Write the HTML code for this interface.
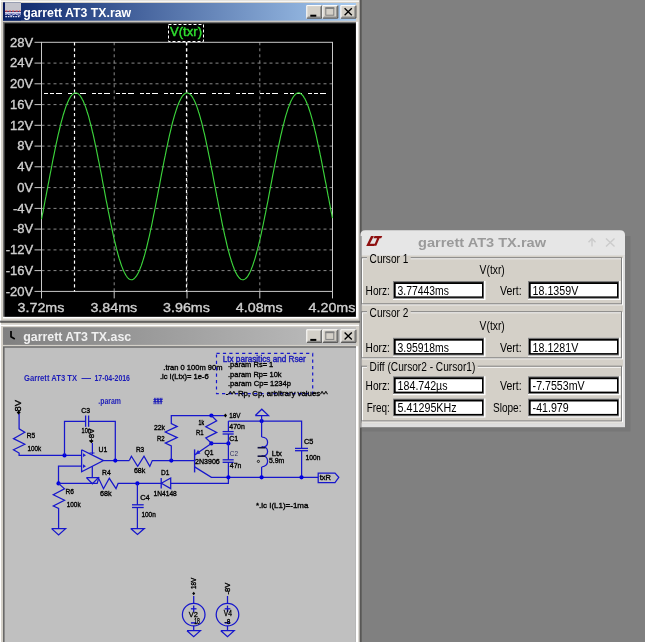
<!DOCTYPE html>
<html><head><meta charset="utf-8"><title>LTspice</title>
<style>
html,body{margin:0;padding:0;background:#808080;overflow:hidden}
svg{display:block;font-family:"Liberation Sans",sans-serif;will-change:transform;transform:translateZ(0)}
</style></head><body>
<svg width="645" height="642" viewBox="0 0 645 642">
<defs>
<linearGradient id="ga" x1="0" x2="1" y1="0" y2="0"><stop offset="0" stop-color="#0a246a"/><stop offset="1" stop-color="#a6caf0"/></linearGradient>
<linearGradient id="gi" x1="0" x2="1" y1="0" y2="0"><stop offset="0" stop-color="#808080"/><stop offset="1" stop-color="#c0c0c0"/></linearGradient>
</defs>
<rect x="0" y="0" width="645" height="642" fill="#808080"/>

<rect x="0" y="0" width="361.5" height="322.8" fill="#d4d0c8"/>
<rect x="0" y="0" width="1" height="322.8" fill="#fff"/>
<rect x="0" y="0.6000000000000001" width="359" height="1.2" fill="#fff"/>
<rect x="359.5" y="0" width="0.8" height="322.8" fill="#808080"/>
<rect x="360.2" y="0" width="1.45" height="322.8" fill="#404040"/>
<rect x="3" y="3" width="353" height="17.7" fill="url(#ga)"/>
<text x="23.2" y="17.1" font-size="12" fill="#fff" font-weight="bold" textLength="108" lengthAdjust="spacingAndGlyphs">garrett AT3 TX.raw</text>
<rect x="306.3" y="5.1" width="16" height="13.5" fill="#d4d0c8"/>
<path d="M306.8,18.6 V5.6 H321.8" stroke="#fff" fill="none"/>
<path d="M321.8,5.6 V18.1 H306.8" stroke="#404040" fill="none"/>
<path d="M320.8,6.6 V17.1 H307.8" stroke="#808080" fill="none"/>
<rect x="310.3" y="14.7" width="6" height="2" fill="#000"/>
<rect x="322.3" y="5.1" width="16" height="13.5" fill="#d4d0c8"/>
<path d="M322.8,18.6 V5.6 H337.8" stroke="#fff" fill="none"/>
<path d="M337.8,5.6 V18.1 H322.8" stroke="#404040" fill="none"/>
<path d="M336.8,6.6 V17.1 H323.8" stroke="#808080" fill="none"/>
<rect x="325.8" y="8.399999999999999" width="8" height="6.8" fill="none" stroke="#808080"/>
<rect x="325.3" y="7.1" width="9" height="1.8" fill="#808080"/>
<rect x="340.4" y="5.1" width="16" height="13.5" fill="#d4d0c8"/>
<path d="M340.9,18.6 V5.6 H355.9" stroke="#fff" fill="none"/>
<path d="M355.9,5.6 V18.1 H340.9" stroke="#404040" fill="none"/>
<path d="M354.9,6.6 V17.1 H341.9" stroke="#808080" fill="none"/>
<path d="M344.59999999999997,8.3 L351.79999999999995,15.299999999999999 M351.79999999999995,8.3 L344.59999999999997,15.299999999999999" stroke="#000" stroke-width="1.35" fill="none"/>
<rect x="0" y="320.6" width="361.5" height="0.8" fill="#808080"/>
<rect x="0" y="321.3" width="361.5" height="1.5" fill="#404040"/>
<rect x="3" y="2.5" width="18" height="18" fill="#0a246a"/>
<rect x="5" y="2.5" width="16" height="8.6" fill="#c4c4cc"/>
<rect x="3.2" y="2.5" width="1.8" height="16" fill="#08185a"/>
<path d="M5.3,11.2 H20.5" stroke="#e04848" stroke-width="1.2" stroke-dasharray="2.2,1.2" fill="none"/>
<rect x="5" y="12" width="16" height="1.8" fill="#d4d4ee"/>
<rect x="5" y="13.8" width="16" height="1.6" fill="#1a2a80"/>
<path d="M5.3,14.6 q2,-1.6 4,0 t4,0 t4,0 t3.5,0" stroke="#e8e8ff" stroke-width="0.9" fill="none"/>
<path d="M5.3,16.7 H20.5" stroke="#e4e4f4" stroke-width="1.3" stroke-dasharray="1.6,0.9" fill="none"/>
<rect x="3" y="21.8" width="355.2" height="296.7" fill="#fff"/>
<rect x="3" y="21.8" width="353" height="295" fill="#707070"/>
<rect x="4.5" y="23.3" width="351.3" height="293.4" fill="#000"/>
<path d="M41.5,63.1 H332.5" stroke="#888888" stroke-width="1" stroke-dasharray="3,3" fill="none"/>
<path d="M41.5,83.8 H332.5" stroke="#888888" stroke-width="1" stroke-dasharray="3,3" fill="none"/>
<path d="M41.5,104.6 H332.5" stroke="#888888" stroke-width="1" stroke-dasharray="3,3" fill="none"/>
<path d="M41.5,125.3 H332.5" stroke="#888888" stroke-width="1" stroke-dasharray="3,3" fill="none"/>
<path d="M41.5,146.1 H332.5" stroke="#888888" stroke-width="1" stroke-dasharray="3,3" fill="none"/>
<path d="M41.5,166.8 H332.5" stroke="#888888" stroke-width="1" stroke-dasharray="3,3" fill="none"/>
<path d="M41.5,187.6 H332.5" stroke="#888888" stroke-width="1" stroke-dasharray="3,3" fill="none"/>
<path d="M41.5,208.4 H332.5" stroke="#888888" stroke-width="1" stroke-dasharray="3,3" fill="none"/>
<path d="M41.5,229.1 H332.5" stroke="#888888" stroke-width="1" stroke-dasharray="3,3" fill="none"/>
<path d="M41.5,249.9 H332.5" stroke="#888888" stroke-width="1" stroke-dasharray="3,3" fill="none"/>
<path d="M41.5,270.6 H332.5" stroke="#888888" stroke-width="1" stroke-dasharray="3,3" fill="none"/>
<path d="M114.2,42.3 V291.4" stroke="#888888" stroke-width="1" stroke-dasharray="3,3" fill="none"/>
<path d="M187.0,42.3 V291.4" stroke="#888888" stroke-width="1" stroke-dasharray="3,3" fill="none"/>
<path d="M259.8,42.3 V291.4" stroke="#888888" stroke-width="1" stroke-dasharray="3,3" fill="none"/>
<rect x="41.5" y="42.3" width="291.0" height="249.09999999999997" fill="none" stroke="#c8c8c8" stroke-width="1"/>
<path d="M34.5,42.3 H41.5" stroke="#c8c8c8" stroke-width="1" fill="none"/>
<path d="M34.5,63.1 H41.5" stroke="#c8c8c8" stroke-width="1" fill="none"/>
<path d="M34.5,83.8 H41.5" stroke="#c8c8c8" stroke-width="1" fill="none"/>
<path d="M34.5,104.6 H41.5" stroke="#c8c8c8" stroke-width="1" fill="none"/>
<path d="M34.5,125.3 H41.5" stroke="#c8c8c8" stroke-width="1" fill="none"/>
<path d="M34.5,146.1 H41.5" stroke="#c8c8c8" stroke-width="1" fill="none"/>
<path d="M34.5,166.8 H41.5" stroke="#c8c8c8" stroke-width="1" fill="none"/>
<path d="M34.5,187.6 H41.5" stroke="#c8c8c8" stroke-width="1" fill="none"/>
<path d="M34.5,208.4 H41.5" stroke="#c8c8c8" stroke-width="1" fill="none"/>
<path d="M34.5,229.1 H41.5" stroke="#c8c8c8" stroke-width="1" fill="none"/>
<path d="M34.5,249.9 H41.5" stroke="#c8c8c8" stroke-width="1" fill="none"/>
<path d="M34.5,270.6 H41.5" stroke="#c8c8c8" stroke-width="1" fill="none"/>
<path d="M34.5,291.4 H41.5" stroke="#c8c8c8" stroke-width="1" fill="none"/>
<path d="M41.5,291.4 V298.4" stroke="#c8c8c8" stroke-width="1" fill="none"/>
<path d="M114.2,291.4 V298.4" stroke="#c8c8c8" stroke-width="1" fill="none"/>
<path d="M187.0,291.4 V298.4" stroke="#c8c8c8" stroke-width="1" fill="none"/>
<path d="M259.8,291.4 V298.4" stroke="#c8c8c8" stroke-width="1" fill="none"/>
<path d="M332.5,291.4 V298.4" stroke="#c8c8c8" stroke-width="1" fill="none"/>
<text x="33.2" y="46.6" font-size="13" fill="#cfcfcf" text-anchor="end" stroke="#cfcfcf" stroke-width="0.35">28V</text>
<text x="33.2" y="67.4" font-size="13" fill="#cfcfcf" text-anchor="end" stroke="#cfcfcf" stroke-width="0.35">24V</text>
<text x="33.2" y="88.1" font-size="13" fill="#cfcfcf" text-anchor="end" stroke="#cfcfcf" stroke-width="0.35">20V</text>
<text x="33.2" y="108.9" font-size="13" fill="#cfcfcf" text-anchor="end" stroke="#cfcfcf" stroke-width="0.35">16V</text>
<text x="33.2" y="129.6" font-size="13" fill="#cfcfcf" text-anchor="end" stroke="#cfcfcf" stroke-width="0.35">12V</text>
<text x="33.2" y="150.4" font-size="13" fill="#cfcfcf" text-anchor="end" stroke="#cfcfcf" stroke-width="0.35">8V</text>
<text x="33.2" y="171.2" font-size="13" fill="#cfcfcf" text-anchor="end" stroke="#cfcfcf" stroke-width="0.35">4V</text>
<text x="33.2" y="191.9" font-size="13" fill="#cfcfcf" text-anchor="end" stroke="#cfcfcf" stroke-width="0.35">0V</text>
<text x="33.2" y="212.7" font-size="13" fill="#cfcfcf" text-anchor="end" stroke="#cfcfcf" stroke-width="0.35">-4V</text>
<text x="33.2" y="233.4" font-size="13" fill="#cfcfcf" text-anchor="end" stroke="#cfcfcf" stroke-width="0.35">-8V</text>
<text x="33.2" y="254.2" font-size="13" fill="#cfcfcf" text-anchor="end" stroke="#cfcfcf" stroke-width="0.35">-12V</text>
<text x="33.2" y="274.9" font-size="13" fill="#cfcfcf" text-anchor="end" stroke="#cfcfcf" stroke-width="0.35">-16V</text>
<text x="33.2" y="295.7" font-size="13" fill="#cfcfcf" text-anchor="end" stroke="#cfcfcf" stroke-width="0.35">-20V</text>
<text x="41.0" y="311.5" font-size="13" fill="#cfcfcf" textLength="46.8" lengthAdjust="spacingAndGlyphs" text-anchor="middle" stroke="#cfcfcf" stroke-width="0.35">3.72ms</text>
<text x="113.8" y="311.5" font-size="13" fill="#cfcfcf" textLength="46.8" lengthAdjust="spacingAndGlyphs" text-anchor="middle" stroke="#cfcfcf" stroke-width="0.35">3.84ms</text>
<text x="186.5" y="311.5" font-size="13" fill="#cfcfcf" textLength="46.8" lengthAdjust="spacingAndGlyphs" text-anchor="middle" stroke="#cfcfcf" stroke-width="0.35">3.96ms</text>
<text x="259.2" y="311.5" font-size="13" fill="#cfcfcf" textLength="46.8" lengthAdjust="spacingAndGlyphs" text-anchor="middle" stroke="#cfcfcf" stroke-width="0.35">4.08ms</text>
<text x="332.0" y="311.5" font-size="13" fill="#cfcfcf" textLength="46.8" lengthAdjust="spacingAndGlyphs" text-anchor="middle" stroke="#cfcfcf" stroke-width="0.35">4.20ms</text>
<path d="M74.5,42.3 V291.4" stroke="#fff" stroke-width="1.2" stroke-dasharray="3.2,2.7" fill="none"/>
<path d="M186.5,42.3 V291.4" stroke="#fff" stroke-width="1.2" stroke-dasharray="3.2,2.7" fill="none"/>
<path d="M44.0,93.5 H326.5" stroke="#fff" stroke-width="1.15" stroke-dasharray="4,2,4,2,6,6" fill="none"/>
<path d="M41.5,219.1 L42.2,215.4 L43.0,211.8 L43.7,208.1 L44.4,204.3 L45.1,200.5 L45.9,196.7 L46.6,192.9 L47.3,189.1 L48.0,185.3 L48.8,181.4 L49.5,177.6 L50.2,173.8 L51.0,170.0 L51.7,166.3 L52.4,162.5 L53.1,158.9 L53.9,155.2 L54.6,151.6 L55.3,148.1 L56.0,144.6 L56.8,141.2 L57.5,137.9 L58.2,134.7 L59.0,131.5 L59.7,128.5 L60.4,125.5 L61.1,122.7 L61.9,119.9 L62.6,117.3 L63.3,114.7 L64.1,112.3 L64.8,110.1 L65.5,107.9 L66.2,105.9 L67.0,104.0 L67.7,102.3 L68.4,100.7 L69.1,99.2 L69.9,97.9 L70.6,96.7 L71.3,95.7 L72.1,94.9 L72.8,94.2 L73.5,93.6 L74.2,93.2 L75.0,93.0 L75.7,92.9 L76.4,93.0 L77.1,93.2 L77.9,93.6 L78.6,94.1 L79.3,94.8 L80.1,95.7 L80.8,96.7 L81.5,97.9 L82.2,99.2 L83.0,100.6 L83.7,102.2 L84.4,104.0 L85.2,105.9 L85.9,107.9 L86.6,110.0 L87.3,112.3 L88.1,114.7 L88.8,117.2 L89.5,119.8 L90.2,122.6 L91.0,125.5 L91.7,128.4 L92.4,131.5 L93.2,134.6 L93.9,137.9 L94.6,141.2 L95.3,144.6 L96.1,148.0 L96.8,151.6 L97.5,155.1 L98.2,158.8 L99.0,162.5 L99.7,166.2 L100.4,169.9 L101.2,173.7 L101.9,177.5 L102.6,181.4 L103.3,185.2 L104.1,189.0 L104.8,192.9 L105.5,196.7 L106.2,200.5 L107.0,204.2 L107.7,208.0 L108.4,211.7 L109.2,215.4 L109.9,219.0 L110.6,222.5 L111.3,226.0 L112.1,229.5 L112.8,232.8 L113.5,236.1 L114.2,239.3 L115.0,242.4 L115.7,245.5 L116.4,248.4 L117.2,251.2 L117.9,253.9 L118.6,256.5 L119.3,258.9 L120.1,261.3 L120.8,263.5 L121.5,265.6 L122.3,267.6 L123.0,269.4 L123.7,271.1 L124.4,272.6 L125.2,274.0 L125.9,275.2 L126.6,276.3 L127.3,277.3 L128.1,278.1 L128.8,278.7 L129.5,279.2 L130.3,279.5 L131.0,279.7 L131.7,279.7 L132.4,279.6 L133.2,279.3 L133.9,278.8 L134.6,278.2 L135.3,277.4 L136.1,276.5 L136.8,275.4 L137.5,274.2 L138.3,272.8 L139.0,271.3 L139.7,269.6 L140.4,267.8 L141.2,265.9 L141.9,263.8 L142.6,261.6 L143.3,259.3 L144.1,256.8 L144.8,254.3 L145.5,251.6 L146.3,248.8 L147.0,245.9 L147.7,242.9 L148.4,239.8 L149.2,236.6 L149.9,233.3 L150.6,230.0 L151.4,226.6 L152.1,223.1 L152.8,219.5 L153.5,215.9 L154.3,212.2 L155.0,208.5 L155.7,204.8 L156.4,201.0 L157.2,197.2 L157.9,193.4 L158.6,189.6 L159.4,185.8 L160.1,181.9 L160.8,178.1 L161.5,174.3 L162.3,170.5 L163.0,166.7 L163.7,163.0 L164.4,159.3 L165.2,155.7 L165.9,152.1 L166.6,148.5 L167.4,145.1 L168.1,141.7 L168.8,138.3 L169.5,135.1 L170.3,131.9 L171.0,128.9 L171.7,125.9 L172.4,123.0 L173.2,120.2 L173.9,117.6 L174.6,115.1 L175.4,112.6 L176.1,110.3 L176.8,108.2 L177.5,106.1 L178.3,104.2 L179.0,102.5 L179.7,100.9 L180.5,99.4 L181.2,98.1 L181.9,96.9 L182.6,95.8 L183.4,95.0 L184.1,94.2 L184.8,93.7 L185.5,93.3 L186.3,93.0 L187.0,92.9 L187.7,93.0 L188.5,93.2 L189.2,93.5 L189.9,94.1 L190.6,94.8 L191.4,95.6 L192.1,96.6 L192.8,97.7 L193.5,99.0 L194.3,100.4 L195.0,102.0 L195.7,103.7 L196.5,105.6 L197.2,107.6 L197.9,109.7 L198.6,112.0 L199.4,114.4 L200.1,116.9 L200.8,119.5 L201.6,122.2 L202.3,125.1 L203.0,128.0 L203.7,131.1 L204.5,134.2 L205.2,137.4 L205.9,140.7 L206.6,144.1 L207.4,147.6 L208.1,151.1 L208.8,154.7 L209.6,158.3 L210.3,162.0 L211.0,165.7 L211.7,169.5 L212.5,173.2 L213.2,177.1 L213.9,180.9 L214.6,184.7 L215.4,188.5 L216.1,192.4 L216.8,196.2 L217.6,200.0 L218.3,203.8 L219.0,207.5 L219.7,211.2 L220.5,214.9 L221.2,218.5 L221.9,222.1 L222.6,225.6 L223.4,229.0 L224.1,232.4 L224.8,235.7 L225.6,238.9 L226.3,242.0 L227.0,245.1 L227.7,248.0 L228.5,250.8 L229.2,253.5 L229.9,256.1 L230.7,258.6 L231.4,261.0 L232.1,263.2 L232.8,265.3 L233.6,267.3 L234.3,269.2 L235.0,270.9 L235.7,272.4 L236.5,273.8 L237.2,275.1 L237.9,276.2 L238.7,277.2 L239.4,278.0 L240.1,278.6 L240.8,279.2 L241.6,279.5 L242.3,279.7 L243.0,279.7 L243.7,279.6 L244.5,279.3 L245.2,278.9 L245.9,278.3 L246.7,277.5 L247.4,276.6 L248.1,275.6 L248.8,274.4 L249.6,273.0 L250.3,271.5 L251.0,269.9 L251.7,268.1 L252.5,266.2 L253.2,264.1 L253.9,261.9 L254.7,259.6 L255.4,257.2 L256.1,254.6 L256.8,251.9 L257.6,249.2 L258.3,246.3 L259.0,243.3 L259.8,240.2 L260.5,237.0 L261.2,233.8 L261.9,230.4 L262.7,227.0 L263.4,223.5 L264.1,220.0 L264.8,216.4 L265.6,212.7 L266.3,209.0 L267.0,205.3 L267.8,201.5 L268.5,197.7 L269.2,193.9 L269.9,190.1 L270.7,186.2 L271.4,182.4 L272.1,178.6 L272.8,174.8 L273.6,171.0 L274.3,167.2 L275.0,163.5 L275.8,159.8 L276.5,156.1 L277.2,152.5 L277.9,149.0 L278.7,145.5 L279.4,142.1 L280.1,138.8 L280.8,135.5 L281.6,132.3 L282.3,129.2 L283.0,126.3 L283.8,123.4 L284.5,120.6 L285.2,117.9 L285.9,115.4 L286.7,112.9 L287.4,110.6 L288.1,108.4 L288.9,106.4 L289.6,104.5 L290.3,102.7 L291.0,101.1 L291.8,99.6 L292.5,98.2 L293.2,97.0 L293.9,96.0 L294.7,95.1 L295.4,94.3 L296.1,93.7 L296.9,93.3 L297.6,93.0 L298.3,92.9 L299.0,92.9 L299.8,93.1 L300.5,93.5 L301.2,94.0 L301.9,94.7 L302.7,95.5 L303.4,96.4 L304.1,97.6 L304.9,98.8 L305.6,100.3 L306.3,101.8 L307.0,103.5 L307.8,105.4 L308.5,107.3 L309.2,109.5 L309.9,111.7 L310.7,114.1 L311.4,116.6 L312.1,119.2 L312.9,121.9 L313.6,124.7 L314.3,127.7 L315.0,130.7 L315.8,133.8 L316.5,137.0 L317.2,140.3 L317.9,143.7 L318.7,147.1 L319.4,150.6 L320.1,154.2 L320.9,157.8 L321.6,161.5 L322.3,165.2 L323.0,169.0 L323.8,172.8 L324.5,176.6 L325.2,180.4 L326.0,184.2 L326.7,188.0 L327.4,191.9 L328.1,195.7 L328.9,199.5 L329.6,203.3 L330.3,207.0 L331.0,210.8 L331.8,214.4 L332.5,218.1" stroke="#3cd43c" stroke-width="1.15" fill="none"/>
<rect x="168" y="24.5" width="35.5" height="17" fill="#000"/>
<rect x="168.5" y="24.5" width="35" height="17" fill="none" stroke="#fff" stroke-width="1" stroke-dasharray="3,2"/>
<text x="170" y="36.4" font-size="13" fill="#30e030" textLength="32" lengthAdjust="spacingAndGlyphs" stroke="#30e030" stroke-width="0.4">V(txr)</text>
<rect x="0" y="322.8" width="361.5" height="319.2" fill="#d4d0c8"/>
<rect x="0" y="322.8" width="1" height="319.2" fill="#fff"/>
<rect x="0" y="324.8" width="359" height="1.2" fill="#fff"/>
<rect x="359.5" y="322.8" width="0.8" height="319.2" fill="#808080"/>
<rect x="360.2" y="322.8" width="1.45" height="319.2" fill="#404040"/>
<rect x="3" y="327.2" width="353" height="17.7" fill="url(#gi)"/>
<text x="23.2" y="341.3" font-size="12" fill="#f0f0f0" font-weight="bold" textLength="108" lengthAdjust="spacingAndGlyphs">garrett AT3 TX.asc</text>
<rect x="306.3" y="329.3" width="16" height="13.5" fill="#d4d0c8"/>
<path d="M306.8,342.8 V329.8 H321.8" stroke="#fff" fill="none"/>
<path d="M321.8,329.8 V342.3 H306.8" stroke="#404040" fill="none"/>
<path d="M320.8,330.8 V341.3 H307.8" stroke="#808080" fill="none"/>
<rect x="310.3" y="338.90000000000003" width="6" height="2" fill="#000"/>
<rect x="322.3" y="329.3" width="16" height="13.5" fill="#d4d0c8"/>
<path d="M322.8,342.8 V329.8 H337.8" stroke="#fff" fill="none"/>
<path d="M337.8,329.8 V342.3 H322.8" stroke="#404040" fill="none"/>
<path d="M336.8,330.8 V341.3 H323.8" stroke="#808080" fill="none"/>
<rect x="325.8" y="332.6" width="8" height="6.8" fill="none" stroke="#808080"/>
<rect x="325.3" y="331.3" width="9" height="1.8" fill="#808080"/>
<rect x="340.4" y="329.3" width="16" height="13.5" fill="#d4d0c8"/>
<path d="M340.9,342.8 V329.8 H355.9" stroke="#fff" fill="none"/>
<path d="M355.9,329.8 V342.3 H340.9" stroke="#404040" fill="none"/>
<path d="M354.9,330.8 V341.3 H341.9" stroke="#808080" fill="none"/>
<path d="M344.59999999999997,332.5 L351.79999999999995,339.5 M351.79999999999995,332.5 L344.59999999999997,339.5" stroke="#000" stroke-width="1.35" fill="none"/>
<path d="M11,331 V336.8 L14.8,339" stroke="#000" stroke-width="1.7" fill="none"/>
<rect x="3" y="346.2" width="355.2" height="296" fill="#fff"/>
<rect x="3" y="346.2" width="353" height="296" fill="#686868"/>
<rect x="4.6" y="347.7" width="351.3" height="295" fill="#c0c0c0"/>
<text x="24" y="381" font-size="8.6" fill="#1a1ab8" font-weight="bold" textLength="53" lengthAdjust="spacingAndGlyphs">Garrett AT3 TX</text>
<text x="81.5" y="381" font-size="8.6" fill="#1a1ab8" font-weight="bold" textLength="9.5" lengthAdjust="spacingAndGlyphs">—</text>
<text x="94.4" y="381" font-size="8.6" fill="#1a1ab8" font-weight="bold" textLength="35.6" lengthAdjust="spacingAndGlyphs">17-04-2016</text>
<text x="98.3" y="403.6" font-size="8.6" fill="#1a1ab8" font-weight="bold" textLength="22.7" lengthAdjust="spacingAndGlyphs">.param</text>
<text x="153.6" y="404.2" font-size="8.8" fill="#1a1ab8" font-weight="bold" textLength="9" lengthAdjust="spacingAndGlyphs" stroke="#1a1ab8" stroke-width="0.5">###</text>
<text x="163.3" y="369.7" font-size="7.8" fill="#000" textLength="59.2" lengthAdjust="spacingAndGlyphs" stroke="#000" stroke-width="0.35">.tran 0 100m 90m</text>
<text x="159.9" y="379.1" font-size="7.8" fill="#000" textLength="48.9" lengthAdjust="spacingAndGlyphs" stroke="#000" stroke-width="0.35">.ic I(Ltx)= 1e-6</text>
<rect x="216.5" y="353.4" width="96.2" height="40.3" fill="none" stroke="#1616cc" stroke-width="1.2" stroke-dasharray="3.2,3.2"/>
<text x="222.7" y="362.1" font-size="8.2" fill="#1a1ab8" textLength="83.1" lengthAdjust="spacingAndGlyphs" stroke="#1a1ab8" stroke-width="0.4">Ltx parasitics and Rser</text>
<text x="228" y="367" font-size="7.8" fill="#000" textLength="45.3" lengthAdjust="spacingAndGlyphs" stroke="#000" stroke-width="0.35">.param Rs= 1</text>
<text x="228" y="376.6" font-size="7.8" fill="#000" textLength="53.6" lengthAdjust="spacingAndGlyphs" stroke="#000" stroke-width="0.35">.param Rp= 10k</text>
<text x="228" y="386.3" font-size="7.8" fill="#000" textLength="63" lengthAdjust="spacingAndGlyphs" stroke="#000" stroke-width="0.35">.param Cp= 1234p</text>
<text x="225.8" y="396.2" font-size="7.8" fill="#000" textLength="101.8" lengthAdjust="spacingAndGlyphs" stroke="#000" stroke-width="0.35">-^^ Rp, Cp, arbitrary values^^</text>
<text x="256" y="508" font-size="7.8" fill="#000" textLength="52.4" lengthAdjust="spacingAndGlyphs" stroke="#000" stroke-width="0.35">*.ic I(L1)=-1ma</text>
<text x="20.9" y="414.5" font-size="8.4" fill="#000" textLength="14.5" lengthAdjust="spacingAndGlyphs" transform="rotate(-90 20.9 414.5)" stroke="#000" stroke-width="0.35">-8V</text>
<path d="M18.7,410.6 l2,2 l-2,2 l-2,-2 z" fill="#000"/>
<path d="M19.1,414.0 L19.1,428.8 L24.8,432.3 L13.5,438.6 L24.8,444.3 L13.5,449.8 L19.1,453.0 L19.1,455.4 L82.0,455.4" stroke="#1616cc" stroke-width="1.25" fill="none" stroke-linejoin="miter"/>
<text x="26.8" y="437.5" font-size="7.4" fill="#000" textLength="8.4" lengthAdjust="spacingAndGlyphs" stroke="#000" stroke-width="0.35">R5</text>
<text x="27.5" y="450.7" font-size="7.4" fill="#000" textLength="13.7" lengthAdjust="spacingAndGlyphs" stroke="#000" stroke-width="0.35">100k</text>
<circle cx="64.5" cy="455.4" r="2.1" fill="#0000e0"/>
<path d="M64.5,455.4 L64.5,421.3 L85.5,421.3" stroke="#1616cc" stroke-width="1.25" fill="none" stroke-linejoin="miter"/>
<path d="M85.6,415.5 L85.6,426.8" stroke="#1616cc" stroke-width="1.3" fill="none" stroke-linejoin="miter"/>
<path d="M88.6,415.5 L88.6,426.8" stroke="#1616cc" stroke-width="1.3" fill="none" stroke-linejoin="miter"/>
<path d="M88.7,421.3 L115.3,421.3 L115.3,460.5" stroke="#1616cc" stroke-width="1.25" fill="none" stroke-linejoin="miter"/>
<text x="81.2" y="412.7" font-size="7.6" fill="#000" textLength="8.8" lengthAdjust="spacingAndGlyphs" stroke="#000" stroke-width="0.35">C3</text>
<text x="81.6" y="432.6" font-size="7.2" fill="#000" textLength="9.4" lengthAdjust="spacingAndGlyphs" stroke="#000" stroke-width="0.35">10n</text>
<text x="93.9" y="443" font-size="7.6" fill="#000" textLength="14.5" lengthAdjust="spacingAndGlyphs" transform="rotate(-90 93.9 443)" stroke="#000" stroke-width="0.35">+8V</text>
<path d="M91.4,439.4 l1.9,1.9 l-1.9,1.9 l-1.9,-1.9 z" fill="#000"/>
<path d="M92.4,443.0 L92.4,454.3" stroke="#1616cc" stroke-width="1.25" fill="none" stroke-linejoin="miter"/>
<path d="M81.6,449.7 L81.6,471.7 L103.5,460.6 L81.6,449.7" stroke="#1616cc" stroke-width="1.25" fill="none" stroke-linejoin="miter"/>
<path d="M82.0,466.2 L58.5,466.2 L58.5,483.4" stroke="#1616cc" stroke-width="1.25" fill="none" stroke-linejoin="miter"/>
<path d="M83,453.3 l3,1.9 l-3,1.9 z M83,464.3 l3,1.9 l-3,1.9 z" fill="#1c1cd6"/>
<path d="M89.5,453.0 L94.5,453.0" stroke="#1616cc" stroke-width="1" fill="none" stroke-linejoin="miter"/>
<path d="M103.5,460.6 L129.3,460.6" stroke="#1616cc" stroke-width="1.25" fill="none" stroke-linejoin="miter"/>
<circle cx="115.3" cy="460.6" r="2.1" fill="#0000e0"/>
<text x="98.6" y="451.7" font-size="7.6" fill="#000" textLength="8.8" lengthAdjust="spacingAndGlyphs" stroke="#000" stroke-width="0.35">U1</text>
<path d="M92.3,466.2 L92.3,477.6" stroke="#1616cc" stroke-width="1.25" fill="none" stroke-linejoin="miter"/>
<path d="M86.4,477.6 L98.4,477.6 L92.4,483.8 L86.4,477.6" stroke="#1616cc" stroke-width="1.25" fill="none" stroke-linejoin="miter"/>
<path d="M129.3,460.6 L131.4,456.2 L137.7,466.4 L144.0,456.2 L149.8,466.4 L152.3,460.6 L194.6,460.6" stroke="#1616cc" stroke-width="1.25" fill="none" stroke-linejoin="miter"/>
<text x="135.9" y="452.4" font-size="7.6" fill="#000" textLength="8.3" lengthAdjust="spacingAndGlyphs" stroke="#000" stroke-width="0.35">R3</text>
<text x="133.9" y="472.7" font-size="7.4" fill="#000" textLength="11.4" lengthAdjust="spacingAndGlyphs" stroke="#000" stroke-width="0.35">68k</text>
<circle cx="58.5" cy="483.4" r="2.1" fill="#0000e0"/>
<path d="M58.5,483.4 L97.2,483.4 L98.6,478.3 L103.5,488.7 L109.3,478.3 L116.0,488.7 L118.1,483.4 L161.2,483.4" stroke="#1616cc" stroke-width="1.25" fill="none" stroke-linejoin="miter"/>
<text x="102" y="474.8" font-size="7.6" fill="#000" textLength="8.7" lengthAdjust="spacingAndGlyphs" stroke="#000" stroke-width="0.35">R4</text>
<text x="100" y="495.7" font-size="7.4" fill="#000" textLength="11.6" lengthAdjust="spacingAndGlyphs" stroke="#000" stroke-width="0.35">68k</text>
<path d="M58.5,483.4 L64.5,488.8 L53.3,494.8 L64.5,500.2 L53.3,506.0 L58.6,508.5 L58.6,528.6" stroke="#1616cc" stroke-width="1.25" fill="none" stroke-linejoin="miter"/>
<path d="M51.6,528.6 L65.6,528.6 L58.6,534.9 L51.6,528.6" stroke="#1616cc" stroke-width="1.25" fill="none" stroke-linejoin="miter"/>
<text x="65.6" y="493.7" font-size="7.4" fill="#000" textLength="8.4" lengthAdjust="spacingAndGlyphs" stroke="#000" stroke-width="0.35">R6</text>
<text x="66.7" y="507" font-size="7.4" fill="#000" textLength="13.9" lengthAdjust="spacingAndGlyphs" stroke="#000" stroke-width="0.35">100k</text>
<circle cx="137.4" cy="483.4" r="2.1" fill="#0000e0"/>
<path d="M137.4,483.4 L137.4,504.8" stroke="#1616cc" stroke-width="1.25" fill="none" stroke-linejoin="miter"/>
<path d="M132.0,504.8 L143.7,504.8" stroke="#1616cc" stroke-width="1.3" fill="none" stroke-linejoin="miter"/>
<path d="M132.0,507.5 L143.7,507.5" stroke="#1616cc" stroke-width="1.3" fill="none" stroke-linejoin="miter"/>
<path d="M137.4,507.5 L137.4,528.5" stroke="#1616cc" stroke-width="1.25" fill="none" stroke-linejoin="miter"/>
<path d="M130.7,528.5 L144.3,528.5 L137.5,534.5 L130.7,528.5" stroke="#1616cc" stroke-width="1.25" fill="none" stroke-linejoin="miter"/>
<text x="140.2" y="499.6" font-size="7.6" fill="#000" textLength="9.6" lengthAdjust="spacingAndGlyphs" stroke="#000" stroke-width="0.35">C4</text>
<text x="141.4" y="516.6" font-size="7.4" fill="#000" textLength="14.4" lengthAdjust="spacingAndGlyphs" stroke="#000" stroke-width="0.35">100n</text>
<path d="M161.2,478.0 L161.2,488.6" stroke="#1616cc" stroke-width="1.3" fill="none" stroke-linejoin="miter"/>
<path d="M161.3,483.3 L170.7,478.0 L170.7,488.6 L161.3,483.3" stroke="#1616cc" stroke-width="1.25" fill="none" stroke-linejoin="miter"/>
<path d="M170.7,483.4 L228.4,483.4 L228.4,477.3" stroke="#1616cc" stroke-width="1.25" fill="none" stroke-linejoin="miter"/>
<text x="160.9" y="475" font-size="7.6" fill="#000" textLength="8.4" lengthAdjust="spacingAndGlyphs" stroke="#000" stroke-width="0.35">D1</text>
<text x="153.5" y="495.7" font-size="7.4" fill="#000" textLength="23.3" lengthAdjust="spacingAndGlyphs" stroke="#000" stroke-width="0.35">1N4148</text>
<circle cx="171.3" cy="460.6" r="2.1" fill="#0000e0"/>
<path d="M171.3,460.6 L171.3,446.0 L165.3,443.1 L177.2,437.6 L165.3,432.0 L177.2,426.4 L171.3,423.6 L171.3,415.5 L224.0,415.5" stroke="#1616cc" stroke-width="1.25" fill="none" stroke-linejoin="miter"/>
<path d="M225.4,413.6 l1.6,1.9 l-1.6,1.9 l-1.6,-1.9 z" fill="#000"/>
<text x="229.3" y="418" font-size="7.6" fill="#000" textLength="11.3" lengthAdjust="spacingAndGlyphs" stroke="#000" stroke-width="0.35">18V</text>
<text x="153.9" y="429.6" font-size="7.4" fill="#000" textLength="11.1" lengthAdjust="spacingAndGlyphs" stroke="#000" stroke-width="0.35">22k</text>
<text x="157" y="440.8" font-size="7.6" fill="#000" textLength="7.7" lengthAdjust="spacingAndGlyphs" stroke="#000" stroke-width="0.35">R2</text>
<circle cx="211.4" cy="415.5" r="2.1" fill="#0000e0"/>
<path d="M211.4,415.5 L216.7,420.8 L205.8,426.8 L216.7,432.4 L205.8,438.0 L211.4,443.3" stroke="#1616cc" stroke-width="1.25" fill="none" stroke-linejoin="miter"/>
<circle cx="211.4" cy="443.4" r="2.1" fill="#0000e0"/>
<path d="M211.4,443.4 L228.4,443.4" stroke="#1616cc" stroke-width="1.25" fill="none" stroke-linejoin="miter"/>
<circle cx="228.4" cy="443.4" r="2.1" fill="#0000e0"/>
<text x="198.6" y="424.6" font-size="7.6" fill="#000" textLength="5.4" lengthAdjust="spacingAndGlyphs" stroke="#000" stroke-width="0.45">1k</text>
<text x="196" y="434.8" font-size="7.6" fill="#000" textLength="7.7" lengthAdjust="spacingAndGlyphs" stroke="#000" stroke-width="0.35">R1</text>
<path d="M194.6,449.4 L194.6,472.4" stroke="#1616cc" stroke-width="1.4" fill="none" stroke-linejoin="miter"/>
<path d="M194.6,455.0 L211.4,443.4" stroke="#1616cc" stroke-width="1.25" fill="none" stroke-linejoin="miter"/>
<path d="M195.2,454.6 l5.2,-1 l-2.4,-3.6 z" fill="#1c1cd6"/>
<path d="M194.6,466.9 L211.4,477.3 L318.2,477.3" stroke="#1616cc" stroke-width="1.25" fill="none" stroke-linejoin="miter"/>
<text x="204.4" y="455" font-size="7.6" fill="#000" textLength="9.1" lengthAdjust="spacingAndGlyphs" stroke="#000" stroke-width="0.35">Q1</text>
<text x="195" y="463.6" font-size="7.4" fill="#000" textLength="24.8" lengthAdjust="spacingAndGlyphs" stroke="#000" stroke-width="0.35">2N3906</text>
<path d="M228.4,421.1 L228.4,431.5" stroke="#1616cc" stroke-width="1.25" fill="none" stroke-linejoin="miter"/>
<path d="M222.6,431.6 L233.7,431.6" stroke="#1616cc" stroke-width="1.3" fill="none" stroke-linejoin="miter"/>
<path d="M222.6,434.0 L233.7,434.0" stroke="#1616cc" stroke-width="1.3" fill="none" stroke-linejoin="miter"/>
<path d="M228.4,434.0 L228.4,459.8" stroke="#1616cc" stroke-width="1.25" fill="none" stroke-linejoin="miter"/>
<path d="M222.6,459.8 L233.7,459.8" stroke="#1616cc" stroke-width="1.3" fill="none" stroke-linejoin="miter"/>
<path d="M222.6,462.3 L233.7,462.3" stroke="#1616cc" stroke-width="1.3" fill="none" stroke-linejoin="miter"/>
<path d="M228.4,462.3 L228.4,477.3" stroke="#1616cc" stroke-width="1.25" fill="none" stroke-linejoin="miter"/>
<circle cx="228.4" cy="477.3" r="2.1" fill="#0000e0"/>
<text x="229.3" y="429" font-size="7.6" fill="#000" textLength="15.5" lengthAdjust="spacingAndGlyphs" stroke="#000" stroke-width="0.35">470n</text>
<text x="229.3" y="440.8" font-size="7.6" fill="#000" textLength="8.9" lengthAdjust="spacingAndGlyphs" stroke="#000" stroke-width="0.35">C1</text>
<text x="229.8" y="456.3" font-size="7.4" fill="#303060" textLength="8.3" lengthAdjust="spacingAndGlyphs">C2</text>
<text x="229.8" y="467.8" font-size="7.6" fill="#000" textLength="11.5" lengthAdjust="spacingAndGlyphs" stroke="#000" stroke-width="0.35">47n</text>
<path d="M228.4,421.1 L301.6,421.1 L301.6,448.4" stroke="#1616cc" stroke-width="1.25" fill="none" stroke-linejoin="miter"/>
<circle cx="261.6" cy="421.1" r="2.1" fill="#0000e0"/>
<path d="M261.6,421.1 L261.6,415.5" stroke="#1616cc" stroke-width="1.25" fill="none" stroke-linejoin="miter"/>
<path d="M255.3,415.5 L268.5,415.5 L261.8,409.2 L255.3,415.5" stroke="#1616cc" stroke-width="1.25" fill="none" stroke-linejoin="miter"/>
<path d="M261.6,421.1 L261.6,437.0" stroke="#1616cc" stroke-width="1.25" fill="none" stroke-linejoin="miter"/>
<path d="M261.6,437 c8,0.5 8,10 0,10.5 m0,-1 c8,0.5 8,9.5 0,10 m0,-1 c8,0.5 8,10.5 0,11.5" stroke="#1616cc" stroke-width="1.25" fill="none"/>
<path d="M257.6,447.7 L265.4,447.7" stroke="#101040" stroke-width="1.6" fill="none" stroke-linejoin="miter"/>
<path d="M257.6,456.2 L265.4,456.2" stroke="#101040" stroke-width="1.6" fill="none" stroke-linejoin="miter"/>
<circle cx="258.4" cy="461.4" r="1.1" fill="none" stroke="#000" stroke-width="0.8"/>
<path d="M261.6,467.0 L261.6,477.3" stroke="#1616cc" stroke-width="1.25" fill="none" stroke-linejoin="miter"/>
<circle cx="261.6" cy="477.3" r="2.1" fill="#0000e0"/>
<text x="271.7" y="456" font-size="7.8" fill="#000" textLength="10.2" lengthAdjust="spacingAndGlyphs" stroke="#000" stroke-width="0.35">Ltx</text>
<text x="269" y="463.1" font-size="7.4" fill="#000" textLength="15.3" lengthAdjust="spacingAndGlyphs" stroke="#000" stroke-width="0.35">5.9m</text>
<path d="M295.0,448.4 L308.0,448.4" stroke="#1616cc" stroke-width="1.3" fill="none" stroke-linejoin="miter"/>
<path d="M295.0,450.7 L308.0,450.7" stroke="#1616cc" stroke-width="1.3" fill="none" stroke-linejoin="miter"/>
<path d="M301.6,450.7 L301.6,477.3" stroke="#1616cc" stroke-width="1.25" fill="none" stroke-linejoin="miter"/>
<circle cx="301.5" cy="477.3" r="2.1" fill="#0000e0"/>
<text x="304.1" y="443.8" font-size="7.6" fill="#000" textLength="9.3" lengthAdjust="spacingAndGlyphs" stroke="#000" stroke-width="0.35">C5</text>
<text x="305.6" y="460" font-size="7.4" fill="#000" textLength="14.8" lengthAdjust="spacingAndGlyphs" stroke="#000" stroke-width="0.35">100n</text>
<path d="M318.2,473.2 H335 L338.8,477.4 L335,482.6 H318.2 Z" stroke="#1616cc" stroke-width="1.25" fill="none"/>
<text x="319.8" y="480.1" font-size="7.8" fill="#000" textLength="11.2" lengthAdjust="spacingAndGlyphs" stroke="#000" stroke-width="0.35">txR</text>
<circle cx="193.7" cy="614.6" r="11.3" fill="none" stroke="#1616cc" stroke-width="1.25"/>
<path d="M193.7,603.3 L193.7,596.0" stroke="#1616cc" stroke-width="1.25" fill="none" stroke-linejoin="miter"/>
<path d="M193.7,626.0 L193.7,630.7" stroke="#1616cc" stroke-width="1.25" fill="none" stroke-linejoin="miter"/>
<path d="M187.0,630.7 L200.4,630.7 L193.7,636.7 L187.0,630.7" stroke="#1616cc" stroke-width="1.25" fill="none" stroke-linejoin="miter"/>
<path d="M190.9,608.8 L196.5,608.8" stroke="#1616cc" stroke-width="1.3" fill="none" stroke-linejoin="miter"/>
<path d="M193.7,605.6 L193.7,612.0" stroke="#1616cc" stroke-width="1.3" fill="none" stroke-linejoin="miter"/>
<path d="M190.9,622.9 L196.5,622.9" stroke="#1616cc" stroke-width="1.5" fill="none" stroke-linejoin="miter"/>
<circle cx="227.5" cy="614.6" r="11.3" fill="none" stroke="#1616cc" stroke-width="1.25"/>
<path d="M227.5,603.3 L227.5,596.0" stroke="#1616cc" stroke-width="1.25" fill="none" stroke-linejoin="miter"/>
<path d="M227.5,626.0 L227.5,630.7" stroke="#1616cc" stroke-width="1.25" fill="none" stroke-linejoin="miter"/>
<path d="M220.8,630.7 L234.2,630.7 L227.5,636.7 L220.8,630.7" stroke="#1616cc" stroke-width="1.25" fill="none" stroke-linejoin="miter"/>
<path d="M224.7,608.8 L230.3,608.8" stroke="#1616cc" stroke-width="1.3" fill="none" stroke-linejoin="miter"/>
<path d="M227.5,605.6 L227.5,612.0" stroke="#1616cc" stroke-width="1.3" fill="none" stroke-linejoin="miter"/>
<path d="M224.7,622.9 L230.3,622.9" stroke="#1616cc" stroke-width="1.5" fill="none" stroke-linejoin="miter"/>
<text x="195.8" y="589" font-size="7.4" fill="#000" textLength="11.2" lengthAdjust="spacingAndGlyphs" transform="rotate(-90 195.8 589)" stroke="#000" stroke-width="0.35">18V</text>
<path d="M193.7,591.8 l1.5,1.7 l-1.5,1.7 l-1.5,-1.7 z" fill="#000"/>
<text x="230" y="594.4" font-size="7.4" fill="#000" textLength="11.8" lengthAdjust="spacingAndGlyphs" transform="rotate(-90 230 594.4)" stroke="#000" stroke-width="0.35">-8V</text>
<text x="188.8" y="617.4" font-size="7.8" fill="#000" textLength="9.1" lengthAdjust="spacingAndGlyphs" stroke="#000" stroke-width="0.3">V2</text>
<text x="194.2" y="623.7" font-size="8.4" fill="#000" textLength="5.6" lengthAdjust="spacingAndGlyphs" stroke="#000" stroke-width="0.3">18</text>
<text x="223.7" y="615.8" font-size="8.2" fill="#000" textLength="8.2" lengthAdjust="spacingAndGlyphs" stroke="#000" stroke-width="0.3">V4</text>
<text x="224.6" y="623.9" font-size="8" fill="#000" textLength="5.8" lengthAdjust="spacingAndGlyphs" stroke="#000" stroke-width="0.3">-8</text>
<path d="M362,427 H625 V236 H630.5 V431.5 H362 Z" fill="#000" fill-opacity="0.07"/>
<path d="M360.4,427 V235 Q360.4,230.2 365.4,230.2 H620 Q625,230.2 625,235 V427 Z" fill="#e6e6e6"/>
<rect x="360.4" y="255.5" width="264.6" height="171.5" fill="#d4d0c8"/>
<path d="M361,427 V236" stroke="#8c8c8c" stroke-width="1.3" fill="none"/>
<path d="M360,427 H625" stroke="#a0a0a0" fill="none"/>
<rect x="361.7" y="423.2" width="263.3" height="3.8" fill="#dedede"/>
<rect x="623" y="255.5" width="2" height="171.5" fill="#dedede"/>
<path d="M371,236 L373.9,236 L369.9,243.7 L375.2,243.7 L374,245.9 L366.2,245.9 Z M374.5,236 L382.3,236 L381.2,238.3 L379.5,238.3 L376.3,245.8 L373.9,245.8 L377.1,238.3 L373.4,238.3 Z" fill="#8e1010"/>
<text x="482" y="247" font-size="12.5" fill="#9a9a9a" font-weight="bold" textLength="128" lengthAdjust="spacingAndGlyphs" text-anchor="middle">garrett AT3 TX.raw</text>
<path d="M592,246.5 V239 M588.5,242.3 L592,238.6 L595.5,242.3" stroke="#cbcbcb" stroke-width="1.4" fill="none"/>
<path d="M606,238.5 L614.5,246.5 M614.5,238.5 L606,246.5" stroke="#cbcbcb" stroke-width="1.4" fill="none"/>
<rect x="362.5" y="258.7" width="260" height="46.10000000000002" fill="none" stroke="#fff"/>
<rect x="361.5" y="257.7" width="260" height="46.10000000000002" fill="none" stroke="#808080"/>
<rect x="367" y="256.7" width="43.7" height="3.5" fill="#d4d0c8"/>
<text x="369.6" y="262.8" font-size="12" fill="#000" textLength="38.7" lengthAdjust="spacingAndGlyphs">Cursor 1</text>
<rect x="362.5" y="312.7" width="260" height="46.10000000000002" fill="none" stroke="#fff"/>
<rect x="361.5" y="311.7" width="260" height="46.10000000000002" fill="none" stroke="#808080"/>
<rect x="367" y="310.7" width="43.7" height="3.5" fill="#d4d0c8"/>
<text x="369.6" y="316.8" font-size="12" fill="#000" textLength="38.7" lengthAdjust="spacingAndGlyphs">Cursor 2</text>
<rect x="362.5" y="367.2" width="260" height="54.69999999999999" fill="none" stroke="#fff"/>
<rect x="361.5" y="366.2" width="260" height="54.69999999999999" fill="none" stroke="#808080"/>
<rect x="367" y="365.2" width="110.7" height="3.5" fill="#d4d0c8"/>
<text x="369.6" y="371.3" font-size="12" fill="#000" textLength="105.7" lengthAdjust="spacingAndGlyphs">Diff (Cursor2 - Cursor1)</text>
<text x="492.2" y="274" font-size="12" fill="#000" textLength="25.2" lengthAdjust="spacingAndGlyphs" text-anchor="middle">V(txr)</text>
<text x="492.2" y="329.6" font-size="12" fill="#000" textLength="25.2" lengthAdjust="spacingAndGlyphs" text-anchor="middle">V(txr)</text>
<text x="365.6" y="295.2" font-size="12" fill="#000" textLength="24.2" lengthAdjust="spacingAndGlyphs">Horz:</text>
<text x="500" y="295.2" font-size="12" fill="#000" textLength="21.7" lengthAdjust="spacingAndGlyphs">Vert:</text>
<rect x="393" y="281" width="92.5" height="19" fill="#fff"/>
<rect x="393" y="281" width="91.0" height="17.8" fill="#808080"/>
<rect x="394" y="282.2" width="89.3" height="15.6" fill="#000"/>
<rect x="395.7" y="284" width="86.3" height="12.4" fill="#fff"/>
<text x="397.6" y="294.8" font-size="12" fill="#000" textLength="51.3" lengthAdjust="spacingAndGlyphs">3.77443ms</text>
<rect x="528" y="281" width="92.5" height="19" fill="#fff"/>
<rect x="528" y="281" width="91.0" height="17.8" fill="#808080"/>
<rect x="529" y="282.2" width="89.3" height="15.6" fill="#000"/>
<rect x="530.7" y="284" width="86.3" height="12.4" fill="#fff"/>
<text x="532.6" y="294.8" font-size="12" fill="#000" textLength="45.7" lengthAdjust="spacingAndGlyphs">18.1359V</text>
<text x="365.6" y="351.6" font-size="12" fill="#000" textLength="24.2" lengthAdjust="spacingAndGlyphs">Horz:</text>
<text x="500" y="351.6" font-size="12" fill="#000" textLength="21.7" lengthAdjust="spacingAndGlyphs">Vert:</text>
<rect x="393" y="337.7" width="92.5" height="19" fill="#fff"/>
<rect x="393" y="337.7" width="91.0" height="17.8" fill="#808080"/>
<rect x="394" y="338.9" width="89.3" height="15.6" fill="#000"/>
<rect x="395.7" y="340.7" width="86.3" height="12.4" fill="#fff"/>
<text x="397.6" y="351.5" font-size="12" fill="#000" textLength="51.3" lengthAdjust="spacingAndGlyphs">3.95918ms</text>
<rect x="528" y="337.7" width="92.5" height="19" fill="#fff"/>
<rect x="528" y="337.7" width="91.0" height="17.8" fill="#808080"/>
<rect x="529" y="338.9" width="89.3" height="15.6" fill="#000"/>
<rect x="530.7" y="340.7" width="86.3" height="12.4" fill="#fff"/>
<text x="532.6" y="351.5" font-size="12" fill="#000" textLength="45.7" lengthAdjust="spacingAndGlyphs">18.1281V</text>
<text x="365.6" y="390" font-size="12" fill="#000" textLength="24.2" lengthAdjust="spacingAndGlyphs">Horz:</text>
<text x="500" y="390" font-size="12" fill="#000" textLength="21.7" lengthAdjust="spacingAndGlyphs">Vert:</text>
<rect x="393" y="376.2" width="92.5" height="19" fill="#fff"/>
<rect x="393" y="376.2" width="91.0" height="17.8" fill="#808080"/>
<rect x="394" y="377.4" width="89.3" height="15.6" fill="#000"/>
<rect x="395.7" y="379.2" width="86.3" height="12.4" fill="#fff"/>
<text x="397.6" y="390.0" font-size="12" fill="#000" textLength="50" lengthAdjust="spacingAndGlyphs">184.742µs</text>
<rect x="528" y="376.2" width="92.5" height="19" fill="#fff"/>
<rect x="528" y="376.2" width="91.0" height="17.8" fill="#808080"/>
<rect x="529" y="377.4" width="89.3" height="15.6" fill="#000"/>
<rect x="530.7" y="379.2" width="86.3" height="12.4" fill="#fff"/>
<text x="532.6" y="390.0" font-size="12" fill="#000" textLength="52" lengthAdjust="spacingAndGlyphs">-7.7553mV</text>
<text x="366.7" y="412" font-size="12" fill="#000" textLength="23.1" lengthAdjust="spacingAndGlyphs">Freq:</text>
<text x="493" y="412" font-size="12" fill="#000" textLength="28.5" lengthAdjust="spacingAndGlyphs">Slope:</text>
<rect x="393" y="398.5" width="92.5" height="19" fill="#fff"/>
<rect x="393" y="398.5" width="91.0" height="17.8" fill="#808080"/>
<rect x="394" y="399.7" width="89.3" height="15.6" fill="#000"/>
<rect x="395.7" y="401.5" width="86.3" height="12.4" fill="#fff"/>
<text x="397.6" y="412.3" font-size="12" fill="#000" textLength="59" lengthAdjust="spacingAndGlyphs">5.41295KHz</text>
<rect x="528" y="398.5" width="92.5" height="19" fill="#fff"/>
<rect x="528" y="398.5" width="91.0" height="17.8" fill="#808080"/>
<rect x="529" y="399.7" width="89.3" height="15.6" fill="#000"/>
<rect x="530.7" y="401.5" width="86.3" height="12.4" fill="#fff"/>
<text x="532.6" y="412.3" font-size="12" fill="#000" textLength="36" lengthAdjust="spacingAndGlyphs">-41.979</text>
</svg></body></html>
